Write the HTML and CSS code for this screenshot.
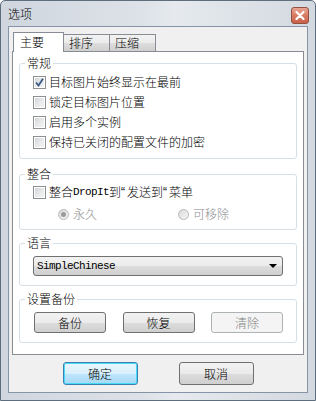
FILE: index.html
```html
<!DOCTYPE html>
<html>
<head>
<meta charset="utf-8">
<link rel="stylesheet" href="styles.css">
</head>
<body>
<div class="window">
  <div class="titlebar">
    <span class="title">选项</span>
    <span class="close">
      <svg width="10" height="9" viewBox="0 0 10 9"><path d="M1.5 1 L8.5 8 M8.5 1 L1.5 8" stroke="#fff" stroke-width="2.2" stroke-linecap="round"/></svg>
    </span>
  </div>
  <div class="client">
    <div class="tabctl">
      <div class="tabs">
        <div class="tab sel">主要</div>
        <div class="tab">排序</div>
        <div class="tab">压缩</div>
      </div>
      <div class="panel">
        <div class="group g1">
          <span class="legend">常规</span>
          <div class="row"><span class="cb checked"><svg width="9" height="9" viewBox="0 0 9 9"><path d="M1 4.5 L3.5 7.5 L8 0.8" fill="none" stroke="#3b5a86" stroke-width="1.8"/></svg></span>目标图片始终显示在最前</div>
          <div class="row"><span class="cb"></span>锁定目标图片位置</div>
          <div class="row"><span class="cb"></span>启用多个实例</div>
          <div class="row"><span class="cb"></span>保持已关闭的配置文件的加密</div>
        </div>
        <div class="group g2">
          <span class="legend">整合</span>
          <div class="row"><span class="cb"></span>整合<span class="mono">DropIt</span>到<span class="q">“</span>发送到<span class="q">“</span>菜单</div>
          <div class="row radios">
            <span class="radio on"><span class="rb"><span class="dot"></span></span>永久</span>
            <span class="radio"><span class="rb"></span>可移除</span>
          </div>
        </div>
        <div class="group g3">
          <span class="legend">语言</span>
          <div class="combo"><span class="mono">SimpleChinese</span><span class="arrow"></span></div>
        </div>
        <div class="group g4">
          <span class="legend">设置备份</span>
          <div class="btnrow">
            <span class="btn">备份</span>
            <span class="btn">恢复</span>
            <span class="btn dis">清除</span>
          </div>
        </div>
      </div>
    </div>
    <div class="footer">
      <span class="btn big def">确定</span>
      <span class="btn big">取消</span>
    </div>
  </div>
</div>
</body>
</html>
```
FILE: styles.css
```css
* { box-sizing: border-box; }
html, body { margin: 0; padding: 0; background: #fff; }
body {
  font-family: "Noto Sans CJK SC", "Liberation Sans", sans-serif;
  font-size: 12px;
  font-weight: 300;
  color: #000;
}
.window {
  width: 316px;
  height: 401px;
  border: 1px solid #5f6e7f;
  border-radius: 5px 5px 0 0;
  background: linear-gradient(90deg, #cfd6de 0%, #dde2e8 45%, #e6eaee 55%, #d3d9e0 100%);
  display: flex;
  flex-direction: column;
}
.titlebar {
  height: 25px;
  display: flex;
  justify-content: space-between;
  align-items: flex-start;
  padding: 0 6px 0 7px;
}
.title {
  line-height: 14px;
  margin-top: 6px;
}
.close {
  margin-top: 6px;
  width: 18px;
  height: 17px;
  border: 1px solid #93513f;
  border-radius: 3px;
  background: linear-gradient(180deg, #e9a593 0%, #d97b63 50%, #c9614a 100%);
  display: flex;
  align-items: center;
  justify-content: center;
}
.client {
  margin: 0 7px 7px;
  flex: 1;
  border: 1px solid #8595a7;
  background: #f0f0f0;
  padding-top: 5px;
  display: flex;
  flex-direction: column;
}
.tabctl { margin: 0 3px; }
.tabs {
  display: flex;
  align-items: flex-end;
  height: 20px;
  margin-bottom: -1px;
  position: relative;
  z-index: 1;
}
.tab {
  width: 46px;
  height: 17px;
  margin-bottom: 1px;
  border: 1px solid #898c95;
  border-bottom: none;
  border-left: none;
  background: linear-gradient(180deg, #f2f2f2 0%, #ebebeb 50%, #dddddd 51%, #cfcfcf 100%);
  padding-left: 5px;
  line-height: 15px;
}
.tab.sel {
  width: 51px;
  height: 20px;
  margin-bottom: 0;
  margin-left: 1px;
  border-left: 1px solid #898c95;
  background: #fff;
  padding-left: 6px;
  line-height: 18px;
}
.panel {
  height: 304px;
  border: 1px solid #898c95;
  background: #fff;
  padding: 11px 6px 0;
  display: flex;
  flex-direction: column;
  gap: 13px;
}
.group {
  position: relative;
  border: 1px solid #d5dfe5;
  border-radius: 3px;
  box-shadow: inset 1px 1px 0 #fff;
}
.legend {
  position: absolute;
  top: -9px;
  left: 5px;
  padding: 0 2px;
  background: #fff;
  line-height: 16px;
}
.g1 { padding: 8px 0 6px 13px; }
.g2 { padding: 7px 0 5px 13px; margin-top: 2px; }
.g3 { padding: 12px 13px 9px 13px; }
.g4 { padding: 12px 13px 9px 14px; }
.row {
  height: 20px;
  display: flex;
  align-items: center;
  line-height: 16px;
}
.cb {
  width: 13px;
  height: 13px;
  border: 1px solid #8e8f8f;
  background: linear-gradient(135deg, #cdd1d6 0%, #e6e8ea 50%, #f5f5f5 100%);
  box-shadow: inset 0 0 0 1px #fff;
  margin-right: 3px;
  display: flex;
  align-items: center;
  justify-content: center;
  flex-shrink: 0;
}
.mono {
  font-family: "Liberation Mono", monospace;
  font-size: 11px;
  font-weight: 400;
  letter-spacing: -0.6px;
}
.q {
  font-family: "Liberation Sans", sans-serif;
  font-weight: 400;
  width: 6px;
  display: inline-block;
}
.radios { margin-top: 2px; color: #8d8d8d; }
.radio { display: flex; align-items: center; }
.radio.on { margin-left: 25px; width: 120px; }
.rb {
  width: 11px;
  height: 11px;
  border-radius: 50%;
  border: 1px solid #b8b8b8;
  background: linear-gradient(135deg, #d9d9d9, #f7f7f7);
  margin-right: 4px;
  display: flex;
  align-items: center;
  justify-content: center;
}
.dot {
  width: 5px;
  height: 5px;
  border-radius: 50%;
  background: #9a9a9a;
}
.combo {
  height: 20px;
  border: 1px solid #707070;
  border-radius: 3px;
  background: linear-gradient(180deg, #f2f2f2 0%, #ebebeb 50%, #dddddd 51%, #cfcfcf 100%);
  display: flex;
  align-items: center;
  justify-content: space-between;
  padding: 0 4px 0 3px;
}
.arrow {
  width: 0;
  height: 0;
  border-left: 4px solid transparent;
  border-right: 4px solid transparent;
  border-top: 4px solid #000;
  margin-right: 1px;
}
.btnrow {
  display: flex;
  justify-content: space-between;
}
.btn {
  width: 72px;
  height: 21px;
  border: 1px solid #707070;
  border-radius: 3px;
  background: linear-gradient(180deg, #f2f2f2 0%, #ebebeb 50%, #dddddd 51%, #cfcfcf 100%);
  display: flex;
  align-items: center;
  justify-content: center;
  line-height: 16px;
}
.btn.dis {
  border-color: #adb2b5;
  background: #f4f4f4;
  color: #838383;
}
.footer {
  display: flex;
  justify-content: center;
  gap: 41px;
  margin-top: 7px;
}
.btn.big { width: 75px; height: 23px; }
.btn.def {
  border-color: #3c7fb1;
  background: linear-gradient(180deg, #eaf6fd 0%, #d9f0fc 50%, #bee6fd 51%, #a7d9f5 100%);
  box-shadow: inset 0 0 0 1px #48dbf9;
}
```
